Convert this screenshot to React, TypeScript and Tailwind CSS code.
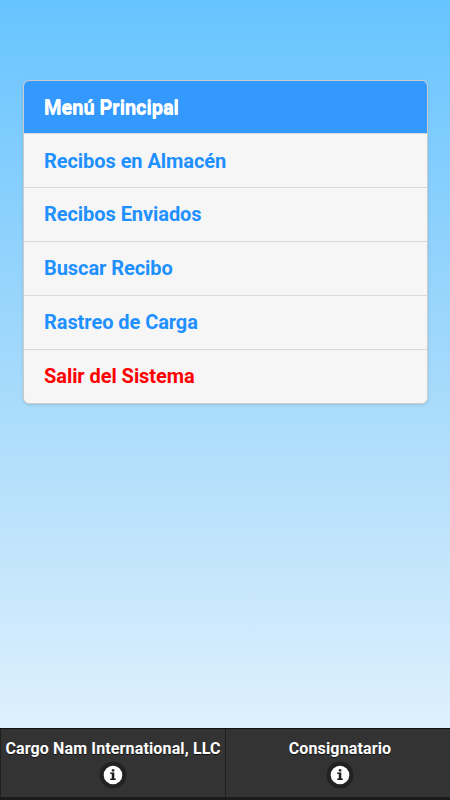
const items = [
  { label: "Recibos en Almacén" },
  { label: "Recibos Enviados" },
  { label: "Buscar Recibo" },
  { label: "Rastreo de Carga" },
  { label: "Salir del Sistema", danger: true },
];

const tabs = ["Cargo Nam International, LLC", "Consignatario"];

function InfoIcon() {
  return (
    <svg viewBox="0 0 28 28" className="h-7 w-7">
      <circle cx="14" cy="14" r="13.5" fill="#222222" />
      <circle cx="14" cy="14" r="9.3" fill="#ffffff" />
      <path
        d="M12.8 8.2h2.5v2.3h-2.5zM11.2 11.5h4.1v6h1.5v1.5h-5.6v-1.5h1.6v-4.5h-1.6z"
        fill="#1c1c1c"
      />
    </svg>
  );
}

export default function App() {
  return (
    <main className="flex h-[800px] w-[450px] flex-col justify-between overflow-hidden bg-linear-to-b from-[#66c4ff] from-0% via-[#a8dbfb] via-50% to-[#eaf5fd] font-['Roboto',sans-serif]">
      <section className="mt-20 mr-[22px] ml-[23px] overflow-hidden rounded-md border border-[#cccccc] bg-[#f6f6f6] shadow-sm">
        <h1 className="flex h-[52px] items-center bg-[#3399ff] px-5 text-xl font-bold tracking-[-0.04px] text-white [text-shadow:0_1px_0_#ffffff]">
          Menú Principal
        </h1>
        <ul>
          {items.map(({ label, danger }) => (
            <li
              key={label}
              className={`flex h-[54px] items-center border-t border-[#d9d9d9] px-5 pb-0.5 text-xl font-bold tracking-[-0.06px] first:pb-0 ${danger ? "text-[#ff0000]" : "text-[#1e90ff]"}`}
            >
              {label}
            </li>
          ))}
        </ul>
      </section>

      <footer className="flex h-[72px] border-t border-b-[3px] border-t-[#111111] border-b-[#1b1b1b] bg-[#333333]">
        {tabs.map((tab) => (
          <div
            key={tab}
            className="flex w-[225px] flex-col items-center border-l border-[#1f1f1f] pt-2 text-base font-bold tracking-[0.14px] text-white [text-shadow:0_1px_0_#111111] last:pl-1"
          >
            <span className="whitespace-nowrap">{tab}</span>
            <InfoIcon />
          </div>
        ))}
      </footer>
    </main>
  );
}
